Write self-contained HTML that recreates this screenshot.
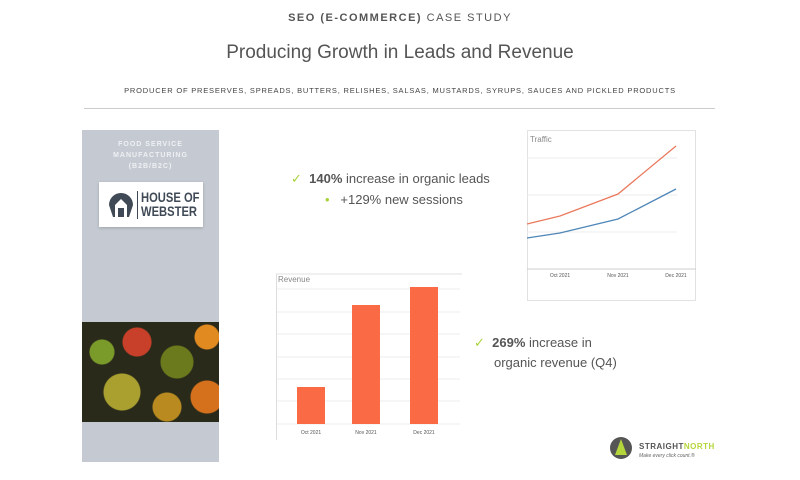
<!DOCTYPE html>
<html><head><meta charset="utf-8"><style>
body{margin:0;width:800px;height:480px;background:#fff;position:relative;overflow:hidden;font-family:"Liberation Sans",sans-serif;color:#555}
.a{position:absolute}
</style></head><body>
<div class="a" style="top:12px;left:0;width:800px;text-align:center;font-size:11px;letter-spacing:1.5px;color:#555"><b>SEO (E-COMMERCE)</b> CASE STUDY</div>
<div class="a" style="top:42px;left:0;width:800px;text-align:center;font-size:19px;color:#555">Producing Growth in Leads and Revenue</div>
<div class="a" style="top:86px;left:0;width:800px;text-align:center;font-size:7.5px;letter-spacing:0.8px;color:#444">PRODUCER OF PRESERVES, SPREADS, BUTTERS, RELISHES, SALSAS, MUSTARDS, SYRUPS, SAUCES AND PICKLED PRODUCTS</div>
<div class="a" style="top:108px;left:84px;width:631px;height:1px;background:#ccc"></div>

<div class="a" style="top:130px;left:82px;width:137px;height:332px;background:#c5cad2"></div>
<div class="a" style="top:139px;left:82px;width:137px;text-align:center;font-size:7px;font-weight:bold;letter-spacing:1px;line-height:11px;color:#eef0f3">FOOD SERVICE<br>MANUFACTURING<br>(B2B/B2C)</div>
<div class="a" style="top:182px;left:99px;width:104px;height:45px;background:#fff;box-shadow:0 1px 3px rgba(0,0,0,.2)"></div>
<svg class="a" style="top:191px;left:107px" width="28" height="28" viewBox="0 0 28 28"><path d="M2 14 A12 12 0 0 1 26 14 L22 26 L6 26 Z" fill="#3f4a56"/><path d="M14 8 L20 14 L20 26 L8 26 L8 14 Z" fill="#fff"/><path d="M11 17h6v9h-6z" fill="#3f4a56"/></svg>
<div class="a" style="top:191px;left:137px;width:1px;height:28px;background:#3f4a56"></div>
<div class="a" style="top:190px;left:141px;font-size:14px;line-height:14px;font-weight:bold;color:#3f4a56;transform:scaleX(.8);transform-origin:left">HOUSE OF<br>WEBSTER</div>
<div class="a" style="top:322px;left:82px;width:137px;height:100px;background:
radial-gradient(circle at 20px 30px,#7a9a2a 0 12px,transparent 13px),
radial-gradient(circle at 55px 20px,#c8402a 0 14px,transparent 15px),
radial-gradient(circle at 95px 40px,#6b7a1c 0 16px,transparent 17px),
radial-gradient(circle at 40px 70px,#a9a030 0 18px,transparent 19px),
radial-gradient(circle at 85px 85px,#b88a20 0 14px,transparent 15px),
radial-gradient(circle at 125px 75px,#d5701c 0 16px,transparent 17px),
radial-gradient(circle at 125px 15px,#e08a20 0 12px,transparent 13px),
#2a2a1a"></div>

<div class="a" style="top:171px;left:291px;font-size:13px;color:#555"><span style="color:#a8d23a">✓</span>&nbsp; <b>140%</b> increase in organic leads</div>
<div class="a" style="top:192px;left:325px;font-size:13px;color:#555"><span style="color:#a8d23a">•</span>&nbsp;&nbsp; +129% new sessions</div>

<svg class="a" style="top:128px;left:525px" width="172" height="174" viewBox="525 128 172 174">
<rect x="527.5" y="130.5" width="168" height="170" fill="#fff" stroke="#e2e2e2"/>
<text x="530" y="142" font-size="8" fill="#888" font-family="Liberation Sans">Traffic</text>
<g stroke="#ececec"><line x1="527" y1="158" x2="677" y2="158"/><line x1="527" y1="195" x2="677" y2="195"/><line x1="527" y1="232" x2="677" y2="232"/></g>
<line x1="527" y1="269" x2="696" y2="269" stroke="#ccc"/>
<polyline points="527,224 560,216 618,194 676,146" fill="none" stroke="#ea7a5e" stroke-width="1.3"/>
<polyline points="527,238 560,233 618,219 676,189" fill="none" stroke="#4e86b8" stroke-width="1.3"/>
<g font-size="5" fill="#555" font-family="Liberation Sans" text-anchor="middle"><text x="560" y="277">Oct 2021</text><text x="618" y="277">Nov 2021</text><text x="676" y="277">Dec 2021</text></g>
</svg>

<svg class="a" style="top:270px;left:272px" width="192" height="170" viewBox="272 270 192 170">
<line x1="276" y1="274" x2="462" y2="274" stroke="#e2e2e2"/>
<line x1="276.5" y1="274" x2="276.5" y2="440" stroke="#ddd"/>
<text x="278" y="282" font-size="8" fill="#888" font-family="Liberation Sans">Revenue</text>
<g stroke="#ececec"><line x1="277" y1="289" x2="460" y2="289"/><line x1="277" y1="312" x2="460" y2="312"/><line x1="277" y1="334" x2="460" y2="334"/><line x1="277" y1="357" x2="460" y2="357"/><line x1="277" y1="379" x2="460" y2="379"/><line x1="277" y1="401" x2="460" y2="401"/><line x1="277" y1="424" x2="460" y2="424"/></g>
<rect x="297" y="387" width="28" height="37" fill="#fa6b45"/>
<rect x="352" y="305" width="28" height="119" fill="#fa6b45"/>
<rect x="410" y="287" width="28" height="137" fill="#fa6b45"/>
<g font-size="5" fill="#555" font-family="Liberation Sans" text-anchor="middle"><text x="311" y="434">Oct 2021</text><text x="366" y="434">Nov 2021</text><text x="424" y="434">Dec 2021</text></g>
</svg>

<div class="a" style="top:333px;left:474px;font-size:13px;line-height:20px;color:#555"><span style="color:#a8d23a">✓</span>&nbsp; <b>269%</b> increase in<br><span style="margin-left:20px">organic revenue (Q4)</span></div>

<svg class="a" style="top:436px;left:609px" width="24" height="24" viewBox="0 0 24 24"><circle cx="12" cy="12" r="11" fill="#555"/><path d="M12 3 L18 19 L6 19 Z" fill="#b5d63a"/></svg>
<div class="a" style="top:442px;left:639px;font-size:8px;font-weight:bold;letter-spacing:.5px;color:#555">STRAIGHT<span style="color:#b5d63a">NORTH</span></div>
<div class="a" style="top:453px;left:639px;font-size:5px;font-style:italic;color:#666">Make every click count.®</div>
</body></html>
